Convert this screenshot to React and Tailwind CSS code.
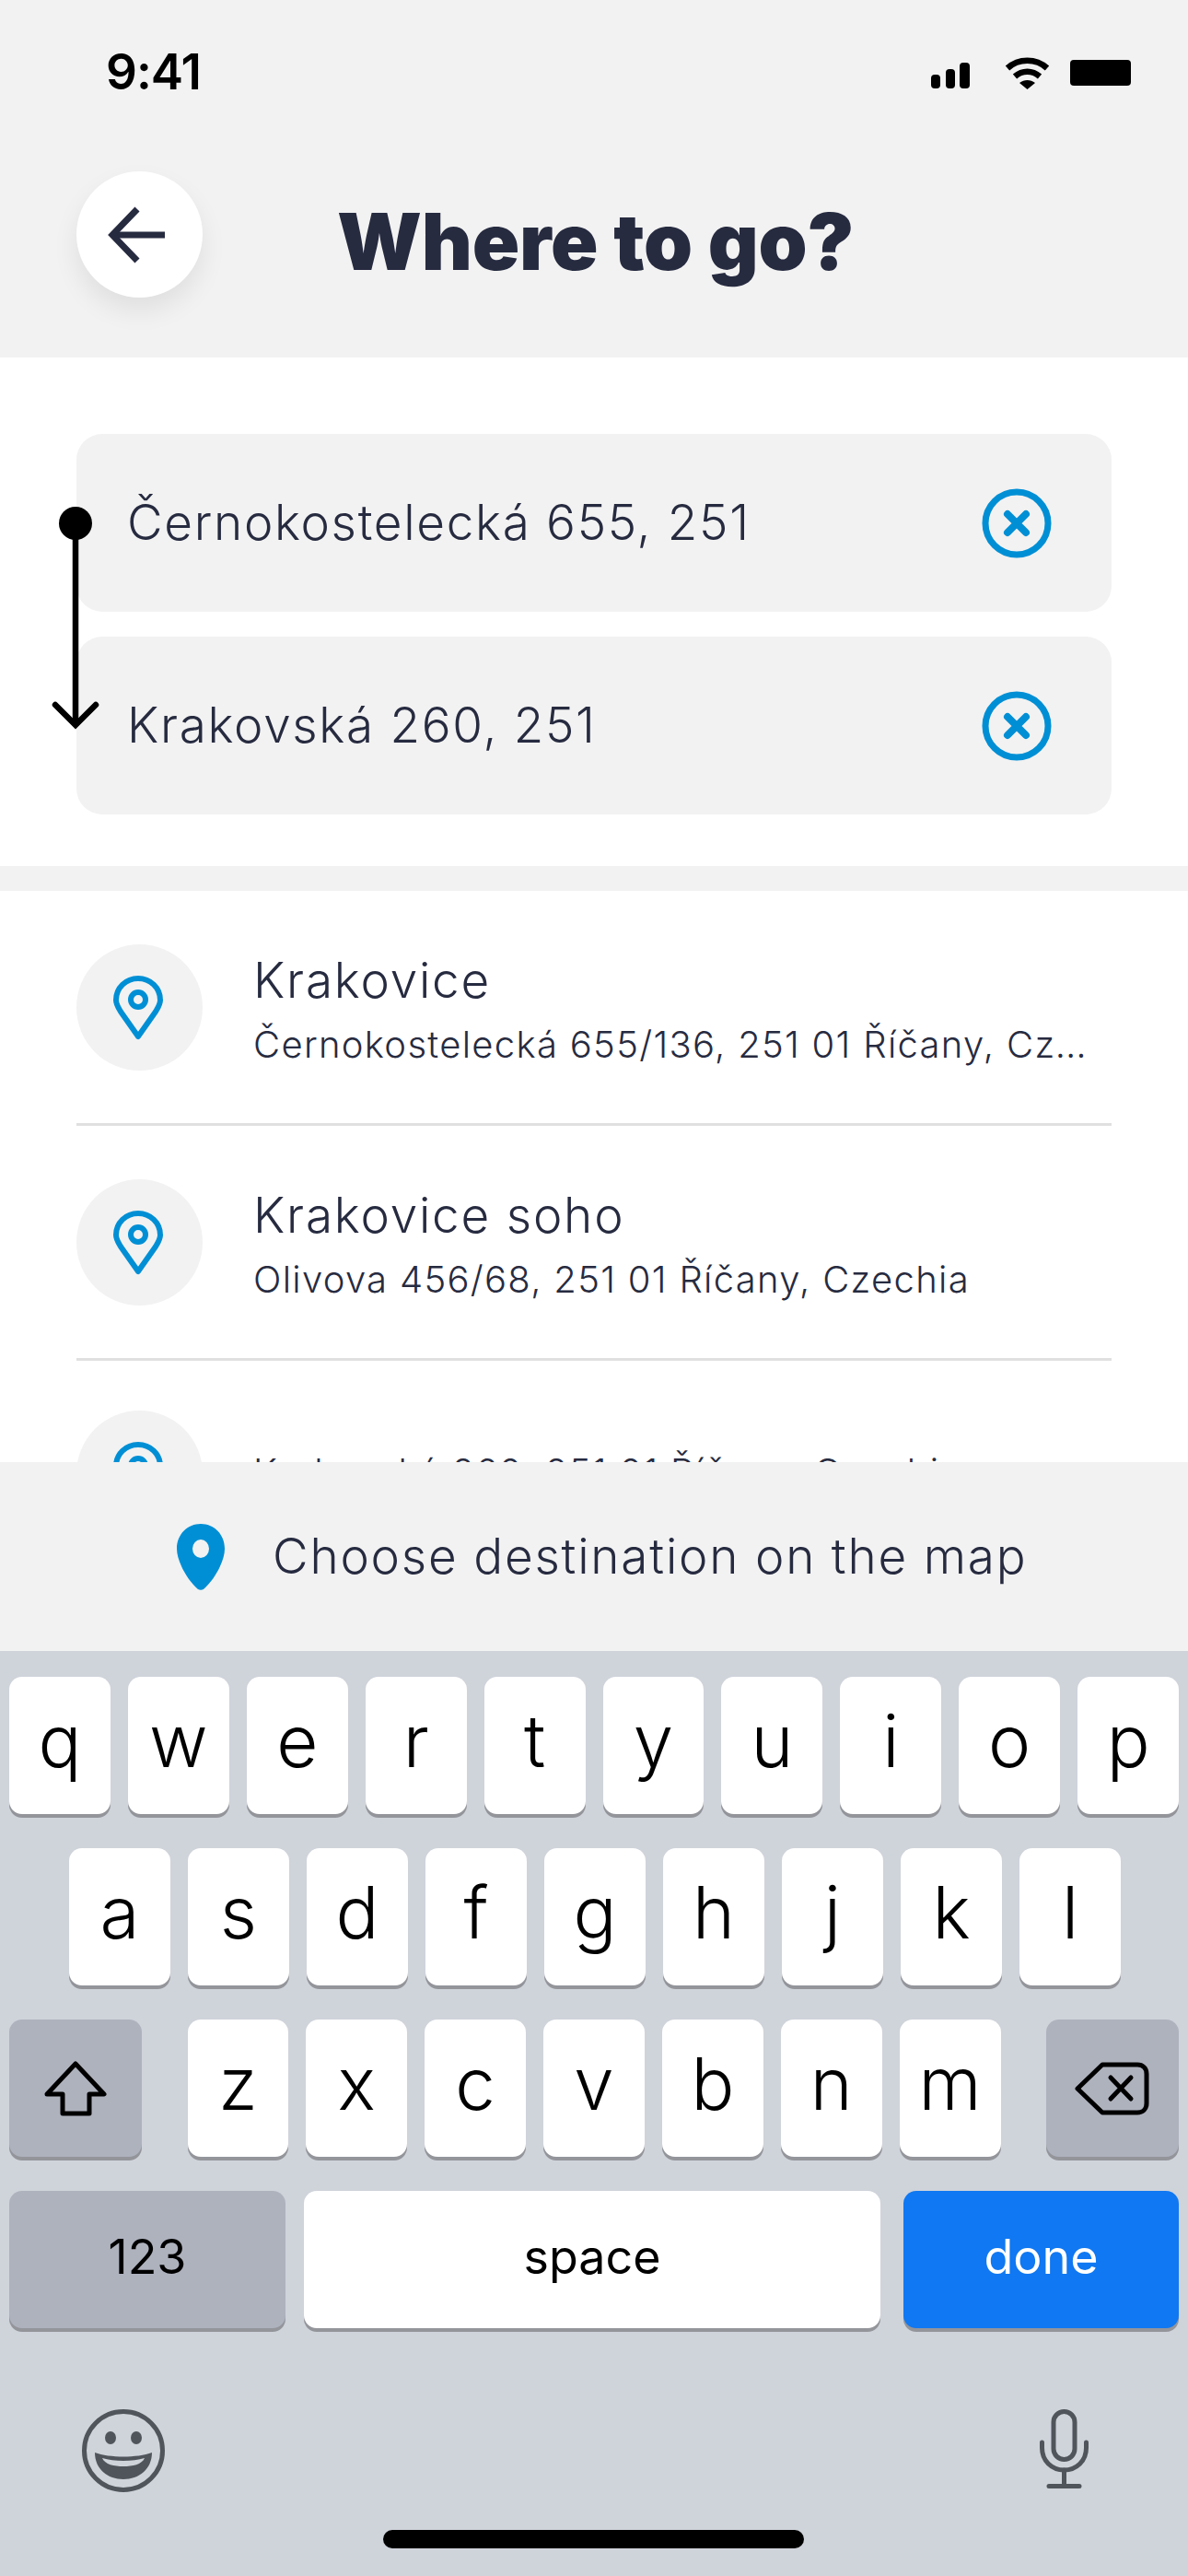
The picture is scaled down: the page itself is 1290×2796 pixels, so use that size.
import React from 'react';

const ROW_ONE = ['q', 'w', 'e', 'r', 't', 'y', 'u', 'i', 'o', 'p'];
const ROW_TWO = ['a', 's', 'd', 'f', 'g', 'h', 'j', 'k', 'l'];
const ROW_THREE = ['z', 'x', 'c', 'v', 'b', 'n', 'm'];

function ClearIcon() {
  return (
    <svg width="76" height="76" viewBox="0 0 76 76" fill="none" stroke="#008fd5" className="shrink-0">
      <circle cx="38" cy="38" r="34" strokeWidth="7" />
      <path d="M28 28L48 48M48 28L28 48" strokeWidth="8" strokeLinecap="round" />
    </svg>
  );
}

function PinOutline() {
  return (
    <svg width="54" height="70" viewBox="0 0 54 70" fill="none" stroke="#008fd5" strokeWidth="6" className="mr-[3px]">
      <path d="M27 66L8 39C5 34 3 31 3 26.500C3 13 14 3 27 3C40 3 51 13 51 26.500C51 31 49 34 46 39Z" strokeLinejoin="round" />
      <circle cx="27" cy="26" r="8" />
    </svg>
  );
}

function PlaceRow({ title, subtitle }) {
  return (
    <div className="flex items-center h-[137px] gap-[55px]">
      <div className="w-[137px] h-[137px] shrink-0 rounded-full bg-[#f2f2f2] flex items-center justify-center">
        <PinOutline />
      </div>
      <div className="min-w-0 flex-1 pt-[3px]">
        <div className="text-[53px] leading-[64px] tracking-[1.8px] font-light text-[#272b40]">{title}</div>
        <div className="mt-[13px] pr-[6px] text-[40px] leading-[50px] tracking-[1.3px] font-light text-[#272b40] truncate">{subtitle}</div>
      </div>
    </div>
  );
}

function AddressField({ value }) {
  return (
    <div className="h-[193px] rounded-[28px] bg-[#f2f2f2] flex items-center justify-between pl-[55px] pr-[65px]">
      <span className="text-[53px] tracking-[1.7px] font-light text-[#272b40]">{value}</span>
      <ClearIcon />
    </div>
  );
}

function LetterKey({ label }) {
  return (
    <div className="flex-1 h-[149px] rounded-[14px] bg-white shadow-[0_4px_0_#93959b] flex items-center justify-center text-[78px] font-light text-black pb-[10px]">
      {label}
    </div>
  );
}

export default function App() {
  return (
    <div className="w-[1290px] h-[2796px] overflow-hidden flex flex-col bg-white font-['Inter',sans-serif]">
      {/* Header */}
      <div className="h-[388px] shrink-0 bg-[#f2f2f2] flex flex-col">
        <div className="h-[186px] flex items-start justify-between pl-[115px] pr-[62px] pt-[48px]">
          <span className="text-[53px] leading-[60px] font-semibold text-black tracking-[-1px]">9:41</span>
          <div className="flex items-start gap-[38px] pt-[14px]">
            <svg width="42" height="28" viewBox="0 0 42 28" fill="black" className="mt-[6px]">
              <rect x="0" y="13" width="10" height="15" rx="4" />
              <rect x="16" y="7" width="10" height="21" rx="4" />
              <rect x="31" y="0" width="11" height="28" rx="4" />
            </svg>
            <div className="flex items-start gap-[22px]">
              <svg width="49" height="35" viewBox="0 0 49 35" fill="none" stroke="black">
                <path d="M3 12C15 1 34 1 46 12" strokeWidth="6.500" />
                <path d="M11 21C19 14 30 14 38 21" strokeWidth="6.500" />
                <path d="M16 28C21 24 28 24 33 28L24.500 35Z" fill="black" stroke="none" />
              </svg>
              <div className="w-[66px] h-[28px] rounded-[4px] bg-black mt-[3px]" />
            </div>
          </div>
        </div>
        <div className="flex items-center pl-[83px] gap-[146px]">
          <div className="w-[137px] h-[137px] rounded-full bg-white shadow-[0_14px_28px_rgba(0,0,0,0.08)] flex items-center justify-center">
            <svg width="64" height="64" viewBox="0 0 64 64" fill="none" stroke="#272b40" strokeWidth="7" className="mr-[8px]">
              <path d="M63 32H6" />
              <path d="M33 4L6 32L33 60" />
            </svg>
          </div>
          <h1 className="text-[85px] leading-[100px] mt-[16px] font-black tracking-[-0.2px] text-[#272b40]">Where to go?</h1>
        </div>
      </div>

      {/* Route inputs */}
      <div className="relative h-[552px] shrink-0 bg-white px-[83px] pt-[83px] flex flex-col gap-[27px]">
        <AddressField value="Černokostelecká 655, 251" />
        <AddressField value="Krakovská 260, 251" />
        <svg width="60" height="246" viewBox="0 0 60 246" fill="none" stroke="black" className="absolute left-[52px] top-[161px]">
          <circle cx="30" cy="19" r="18" fill="black" stroke="none" />
          <path d="M30 19V238" strokeWidth="6.500" />
          <path d="M8 216L30 238L52 216" strokeWidth="6.500" strokeLinecap="round" />
        </svg>
      </div>

      <div className="h-[27px] shrink-0 bg-[#f2f2f2]" />

      {/* Results */}
      <div className="h-[620px] shrink-0 overflow-hidden px-[83px] pt-[58px]">
        <PlaceRow title="Krakovice" subtitle="Černokostelecká 655/136, 251 01 Říčany, Czechia" />
        <div className="h-[3px] bg-[#e0e0e0] mt-[57px] mb-[58px]" />
        <PlaceRow title="Krakovice soho" subtitle="Olivova 456/68, 251 01 Říčany, Czechia" />
        <div className="h-[3px] bg-[#e0e0e0] mt-[57px] mb-[54px]" />
        <div className="flex gap-[55px]">
          <div className="w-[137px] h-[137px] shrink-0 rounded-full bg-[#f2f2f2] flex items-center justify-center">
            <PinOutline />
          </div>
          <div className="pt-[42px] text-[40px] leading-[50px] tracking-[1.3px] font-light text-[#272b40]">Krakovská 260, 251 01 Říčany, Czechia</div>
        </div>
      </div>

      {/* Choose on map */}
      <div className="h-[205px] shrink-0 bg-[#f2f2f2] flex items-center pl-[192px] gap-[52px]">
        <svg width="52" height="72" viewBox="0 0 52 72" fill="#008fd5">
          <path fillRule="evenodd" d="M26 0C40 0 52 11 52 27C52 33 50 39 47 46C43 55 36 65 29 71C27 72 25 72 23 71C16 65 9 55 5 46C2 39 0 33 0 27C0 11 12 0 26 0ZM26 17A9 10 0 1 0 26 37A9 10 0 1 0 26 17Z" />
        </svg>
        <span className="text-[53px] tracking-[1.8px] font-light text-[#272b40]">Choose destination on the map</span>
      </div>

      {/* Keyboard */}
      <div className="flex-1 bg-[#cfd3da] pt-[28px] flex flex-col items-stretch">
        <div className="flex gap-[19px] px-[10px]">
          {ROW_ONE.map(k => <LetterKey key={k} label={k} />)}
        </div>
        <div className="flex gap-[19px] pl-[75px] pr-[73px] mt-[37px]">
          {ROW_TWO.map(k => <LetterKey key={k} label={k} />)}
        </div>
        <div className="flex justify-between px-[10px] mt-[37px]">
          <div className="w-[144px] h-[149px] rounded-[14px] bg-[#aeb2bd] shadow-[0_4px_0_#93959b] flex items-center justify-center">
            <svg width="68" height="60" viewBox="0 0 68 60" fill="none" stroke="black" strokeWidth="5" strokeLinejoin="round">
              <path d="M34 3L65 36H49V57H20V36H3Z" />
            </svg>
          </div>
          <div className="w-[883px] flex gap-[19px]">
            {ROW_THREE.map(k => <LetterKey key={k} label={k} />)}
          </div>
          <div className="w-[144px] h-[149px] rounded-[14px] bg-[#aeb2bd] shadow-[0_4px_0_#93959b] flex items-center justify-center">
            <svg width="82" height="60" viewBox="0 0 82 60" fill="none" stroke="black" strokeWidth="5" strokeLinejoin="round" strokeLinecap="round">
              <path d="M3 30L30 4H68C74 4 78 8 78 14V46C78 52 74 56 68 56H30Z" />
              <path d="M39 18L61 41M61 18L39 41" />
            </svg>
          </div>
        </div>
        <div className="flex px-[10px] mt-[37px]">
          <div className="w-[300px] h-[149px] rounded-[14px] bg-[#aeb2bd] shadow-[0_4px_0_#93959b] flex items-center justify-center text-[52px] text-black pb-[6px]">123</div>
          <div className="w-[626px] ml-[20px] h-[149px] rounded-[14px] bg-white shadow-[0_4px_0_#93959b] flex items-center justify-center text-[52px] text-black pb-[6px]">space</div>
          <div className="w-[299px] ml-[25px] h-[149px] rounded-[14px] bg-[#0f78f2] shadow-[0_4px_0_#93959b] flex items-center justify-center text-[52px] text-white pb-[6px]">done</div>
        </div>
        <div className="flex items-start justify-between pl-[89px] pr-[108px] mt-[88px]">
          <svg width="90" height="90" viewBox="0 0 90 90" fill="none">
            <circle cx="45" cy="45" r="42.500" stroke="#50555c" strokeWidth="5" />
            <ellipse cx="31" cy="31" rx="6" ry="7" fill="#50555c" />
            <ellipse cx="59" cy="31" rx="6" ry="7" fill="#50555c" />
            <path d="M14 47C30 53 60 53 76 47C76 65 62 76 45 76C28 76 14 65 14 47Z" fill="#50555c" />
            <path d="M22 53C35 57 55 57 68 53C65 60 55 62 45 62C35 62 25 60 22 53Z" fill="#cfd3da" />
          </svg>
          <svg width="53" height="86" viewBox="0 0 53 86" fill="none" stroke="#50555c" strokeWidth="5" strokeLinecap="round">
            <rect x="15" y="2.500" width="23" height="52" rx="11.500" />
            <path d="M2.500 36V42C2.500 56 13 66 26.500 66C40 66 50.500 56 50.500 42V36" />
            <path d="M26.500 66V83M10 83.500H43" />
          </svg>
        </div>
        <div className="w-[457px] h-[20px] rounded-full bg-black self-center ml-[-1px] mt-[41px]" />
      </div>
    </div>
  );
}
